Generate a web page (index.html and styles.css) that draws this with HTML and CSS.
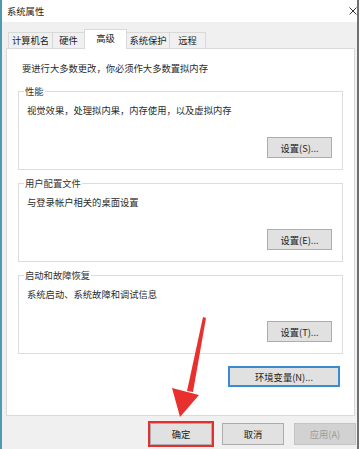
FILE: index.html
```html
<!DOCTYPE html>
<html lang="zh-CN">
<head>
<meta charset="utf-8">
<title>系统属性</title>
<link rel="stylesheet" href="styles.css">
</head>
<body>
<div class="window">
  <div class="titlebar">
    <span class="title">系统属性</span>
    <svg class="close" width="8" height="8" viewBox="0 0 8 8"><path d="M0.5 0.5 L7.5 7.5 M7.5 0.5 L0.5 7.5" stroke="#333" stroke-width="1" fill="none"/></svg>
  </div>
  <div class="content">
    <div class="tabs">
      <div class="tab tab-1">计算机名</div>
      <div class="tab tab-2">硬件</div>
      <div class="tab tab-3 active">高级</div>
      <div class="tab tab-4">系统保护</div>
      <div class="tab tab-5">远程</div>
    </div>
    <div class="panel">
      <p class="intro">要进行大多数更改，你必须作大多数置拟内存</p>
      <fieldset class="group">
        <legend>性能</legend>
        <p class="desc">视觉效果，处理拟内果，内存使用，以及虚拟内存</p>
        <div class="row"><button class="btn">设置(S)...</button></div>
      </fieldset>
      <fieldset class="group">
        <legend>用户配置文件</legend>
        <p class="desc">与登录帐户相关的桌面设置</p>
        <div class="row"><button class="btn">设置(E)...</button></div>
      </fieldset>
      <fieldset class="group">
        <legend>启动和故障恢复</legend>
        <p class="desc">系统启动、系统故障和调试信息</p>
        <div class="row"><button class="btn">设置(T)...</button></div>
      </fieldset>
      <div class="env-row"><button class="btn btn-env">环境变量(N)...</button></div>
    </div>
  </div>
  <div class="footer">
    <button class="btn btn-foot btn-ok">确定</button>
    <button class="btn btn-foot">取消</button>
    <button class="btn btn-foot" disabled>应用(A)</button>
  </div>
</div>
<svg class="arrow" width="363" height="449" viewBox="0 0 363 449">
  <polygon points="203,317 206,318 193,392 187,391" fill="#e8312f"/>
  <polygon points="172,388 199,395 180,417" fill="#e8312f"/>
</svg>
</body>
</html>
```
FILE: styles.css
```css
* { box-sizing: border-box; }
html, body { margin: 0; padding: 0; }
body {
  width: 363px;
  height: 449px;
  background: #fff;
  font-family: "Noto Sans CJK SC", "Noto Sans", sans-serif;
  font-size: 9.3px;
  line-height: 12px;
  color: #2b2b2b;
  position: relative;
  overflow: hidden;
}
.window {
  width: 359px;
  height: 449px;
  border-left: 2px solid #4e9bb0;
  border-right: 2px solid #707070;
  background: #f0f0f0;
  display: flex;
  flex-direction: column;
}
.titlebar {
  height: 22px;
  flex: none;
  background: #fff;
  display: flex;
  align-items: center;
  justify-content: space-between;
  padding: 0 0 0 5px;
}
.title { color: #222; }
.close { display: block; }
.content {
  flex: 1;
  display: flex;
  flex-direction: column;
  padding: 0 2px 0 4px;
}
.tabs {
  height: 26px;
  flex: none;
  display: flex;
  align-items: flex-end;
  padding-left: 2px;
}
.tab {
  height: 16px;
  border: 1px solid #d9d9d9;
  border-bottom: none;
  background: #f0f0f0;
  text-align: center;
  line-height: 14px;
  margin-left: -1px;
  color: #222;
}
.tab-1 { width: 45px; margin-left: 0; }
.tab-2 { width: 33px; }
.tab-3 { width: 43px; }
.tab-4 { width: 44px; }
.tab-5 { width: 37px; }
.tab.active {
  height: 20px;
  background: #fff;
  margin-bottom: -1px;
  position: relative;
  z-index: 1;
  line-height: 17px;
}
.panel {
  flex: 1;
  background: #fff;
  border: 1px solid #d9d9d9;
  padding: 13px 11px 0 11px;
}
.intro { margin: 0 0 0 4px; white-space: nowrap; }
.group {
  margin: 7px 0 0;
  padding: 0 10px 11px 8px;
  border: 1px solid #dcdcdc;
  min-width: 0;
}
.intro + .group { margin-top: 11px; }
.group legend {
  padding: 0 1px;
  margin-left: -3px;
  line-height: 12px;
  color: #333;
}
.desc { margin: 7px 0 0; white-space: nowrap; }
.row {
  display: flex;
  justify-content: flex-end;
  margin-top: 21px;
}
.btn {
  font-family: inherit;
  font-size: 9.3px;
  line-height: 12px;
  color: #222;
  background: #e1e1e1;
  border: 1px solid #adadad;
  padding: 0;
  margin: 0;
  width: 65px;
  height: 21px;
}
.env-row {
  display: flex;
  justify-content: flex-end;
  margin-top: 12px;
  padding-right: 3px;
}
.btn-env {
  width: 112px;
  border: 2px solid #3b8ad3;
}
.footer {
  height: 33px;
  flex: none;
  display: flex;
  justify-content: flex-end;
  gap: 10px;
  padding: 7px 1px 0 0;
}
.btn-foot { width: 62px; height: 22px; }
.btn-ok { outline: 2px solid #e3302f; outline-offset: 0; }
.btn:disabled {
  background: #d2d2d2;
  border-color: #c4c4c4;
  color: #9c9c9c;
}
.arrow {
  position: absolute;
  left: 0;
  top: 0;
  pointer-events: none;
}
```
